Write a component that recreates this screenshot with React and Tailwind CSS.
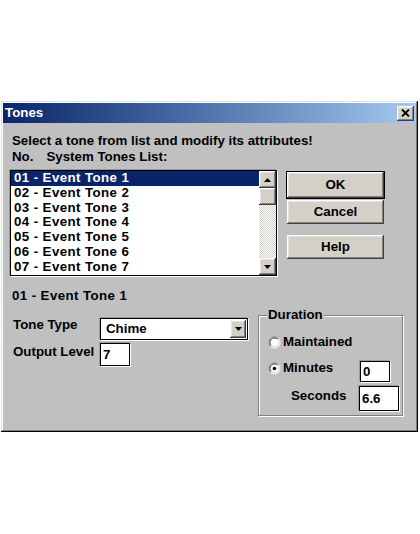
import React from "react";

const raised =
  "bg-[#d4d0c8] shadow-[inset_-1px_-1px_#404040,inset_1px_1px_#ffffff,inset_-2px_-2px_#808080,inset_2px_2px_#e4e2dc]";

const field = "bg-white border border-black shadow-[1px_1px_0_#ffffff,-1px_-1px_0_#9a9a9a]";

const tones = [
  "01 - Event Tone 1",
  "02 - Event Tone 2",
  "03 - Event Tone 3",
  "04 - Event Tone 4",
  "05 - Event Tone 5",
  "06 - Event Tone 6",
  "07 - Event Tone 7",
];

const Arrow = ({ up }) => (
  <svg width="7" height="4" viewBox="0 0 7 4">
    {up ? <path d="M3.5 0 L7 4 L0 4 Z" fill="#000" /> : <path d="M0 0 L7 0 L3.5 4 Z" fill="#000" />}
  </svg>
);

const Radio = ({ checked }) => (
  <svg width="13" height="13" viewBox="0 0 13 13">
    <circle cx="6.5" cy="6.5" r="5.5" fill="#ffffff" />
    <path d="M2.6 10.4 A5.5 5.5 0 0 1 10.4 2.6" stroke="#808080" strokeWidth="1" fill="none" />
    <path d="M3.3 9.7 A4.5 4.5 0 0 1 9.7 3.3" stroke="#404040" strokeWidth="1" fill="none" />
    <path d="M10.4 2.6 A5.5 5.5 0 0 1 2.6 10.4" stroke="#f4f4f4" strokeWidth="1" fill="none" />
    <path d="M9.7 3.3 A4.5 4.5 0 0 1 3.3 9.7" stroke="#d4d0c8" strokeWidth="1" fill="none" />
    {checked && <circle cx="6.5" cy="6.5" r="1.8" fill="#000" />}
  </svg>
);

const Button = ({ children, isDefault, className = "" }) => (
  <div
    className={`flex items-center justify-center ${raised} ${
      isDefault ? "outline outline-1 outline-black" : ""
    } ${className}`}
  >
    {children}
  </div>
);

const App = () => {
  return (
    <div className="min-h-[534px] bg-white pt-[101px] pl-[1px] font-['Liberation_Sans',Arial,sans-serif] text-[13.3px] font-bold text-black">
      <div className="w-[417px] h-[331px] bg-[#c0c0c0] p-[2px] shadow-[inset_-1px_-1px_#000000,inset_1px_1px_#dfdfdf,inset_-2px_-2px_#808080,inset_2px_2px_#ffffff]">
        {/* title bar */}
        <div className="h-[20px] flex items-center justify-between pl-[2px] pr-[2px] bg-gradient-to-r from-[#0a246a] to-[#a6caf0]">
          <span className="text-white leading-[16px]">Tones</span>
          <div className={`w-[17px] h-[15px] flex items-center justify-center ${raised}`}>
            <svg width="9" height="8" viewBox="0 0 9 8">
              <path d="M1 0.5 L8 7.5 M8 0.5 L1 7.5" stroke="#000" strokeWidth="1.8" />
            </svg>
          </div>
        </div>

        <div className="flex flex-col pl-[7px] pt-[10px]">
          <div className="pl-[2px] leading-[16px]">Select a tone from list and modify its attributes!</div>
          <div className="pl-[2px] leading-[16px]">
            <span>No.</span>
            <span className="ml-[13px]">System Tones List:</span>
          </div>

          <div className="mt-[5px] flex items-start">
            <div className={`w-[267px] h-[106px] flex ${field}`}>
              <div className="flex-1 flex flex-col">
                {tones.map((t, i) => (
                  <div
                    key={t}
                    className={`h-[14.7px] flex items-center pl-[3px] tracking-[0.4px] whitespace-nowrap ${
                      i === 0 ? "bg-[#0a246a] text-white" : ""
                    }`}
                  >
                    {t}
                  </div>
                ))}
              </div>
              <div className="w-[17px] flex flex-col">
                <div className={`h-[17px] flex items-center justify-center ${raised}`}>
                  <Arrow up />
                </div>
                <div className={`h-[17px] ${raised}`} />
                <div className="flex-1 bg-[repeating-conic-gradient(#ffffff_0%_25%,#d4d0c8_0%_50%)] bg-[length:2px_2px]" />
                <div className={`h-[17px] flex items-center justify-center ${raised}`}>
                  <Arrow />
                </div>
              </div>
            </div>

            <div className="ml-[10px] mt-[2px] w-[97px] flex flex-col">
              <Button isDefault className="h-[26px]">OK</Button>
              <Button className="h-[24px] mt-[2px]">Cancel</Button>
              <Button className="h-[24px] mt-[11px]">Help</Button>
            </div>
          </div>

          <div className="mt-[12px] pl-[2px] leading-[16px] tracking-[0.4px]">01 - Event Tone 1</div>

          <div className="mt-[3px] flex items-start">
            <div className="w-[248px] pl-[3px] flex flex-col">
              <div className="mt-[10px] flex items-start">
                <div className="w-[87px] leading-[16px]">Tone Type</div>
                <div className={`mt-[1px] w-[148px] h-[22px] flex items-center justify-between pl-[5px] pr-[1px] ${field}`}>
                  <span className="leading-[16px]">Chime</span>
                  <div className={`w-[16px] h-[18px] flex items-center justify-center ${raised}`}>
                    <Arrow />
                  </div>
                </div>
              </div>
              <div className="mt-[3px] flex items-start">
                <div className="w-[87px] mt-[1px] leading-[16px] whitespace-nowrap">Output Level</div>
                <div className={`w-[30px] h-[23px] flex items-center pl-[2px] ${field}`}>7</div>
              </div>
            </div>

            <div className="relative mt-[8px] w-[145px] h-[101px] border border-[#808080] shadow-[1px_1px_0_#ffffff,inset_1px_1px_0_#ffffff]">
              <div className="absolute left-[8px] top-[-9px] px-[1px] bg-[#c0c0c0] leading-[16px]">Duration</div>
              <div className="pl-[9px] flex flex-col">
                <div className="mt-[18px] h-[16px] flex items-center">
                  <Radio />
                  <span className="ml-[2px] leading-[16px]">Maintained</span>
                </div>
                <div className="mt-[10px] flex items-start">
                  <div className="w-[92px] h-[16px] flex items-center">
                    <Radio checked />
                    <span className="ml-[2px] leading-[16px]">Minutes</span>
                  </div>
                  <div className={`mt-[1px] w-[30px] h-[21px] flex items-center pl-[2px] ${field}`}>0</div>
                </div>
                <div className="mt-[4px] flex items-start">
                  <div className="ml-[23px] w-[68px] mt-[2px] leading-[16px]">Seconds</div>
                  <div className={`w-[40px] h-[25px] flex items-center pl-[2px] ${field}`}>6.6</div>
                </div>
              </div>
            </div>
          </div>
        </div>
      </div>
    </div>
  );
};

export default App;
